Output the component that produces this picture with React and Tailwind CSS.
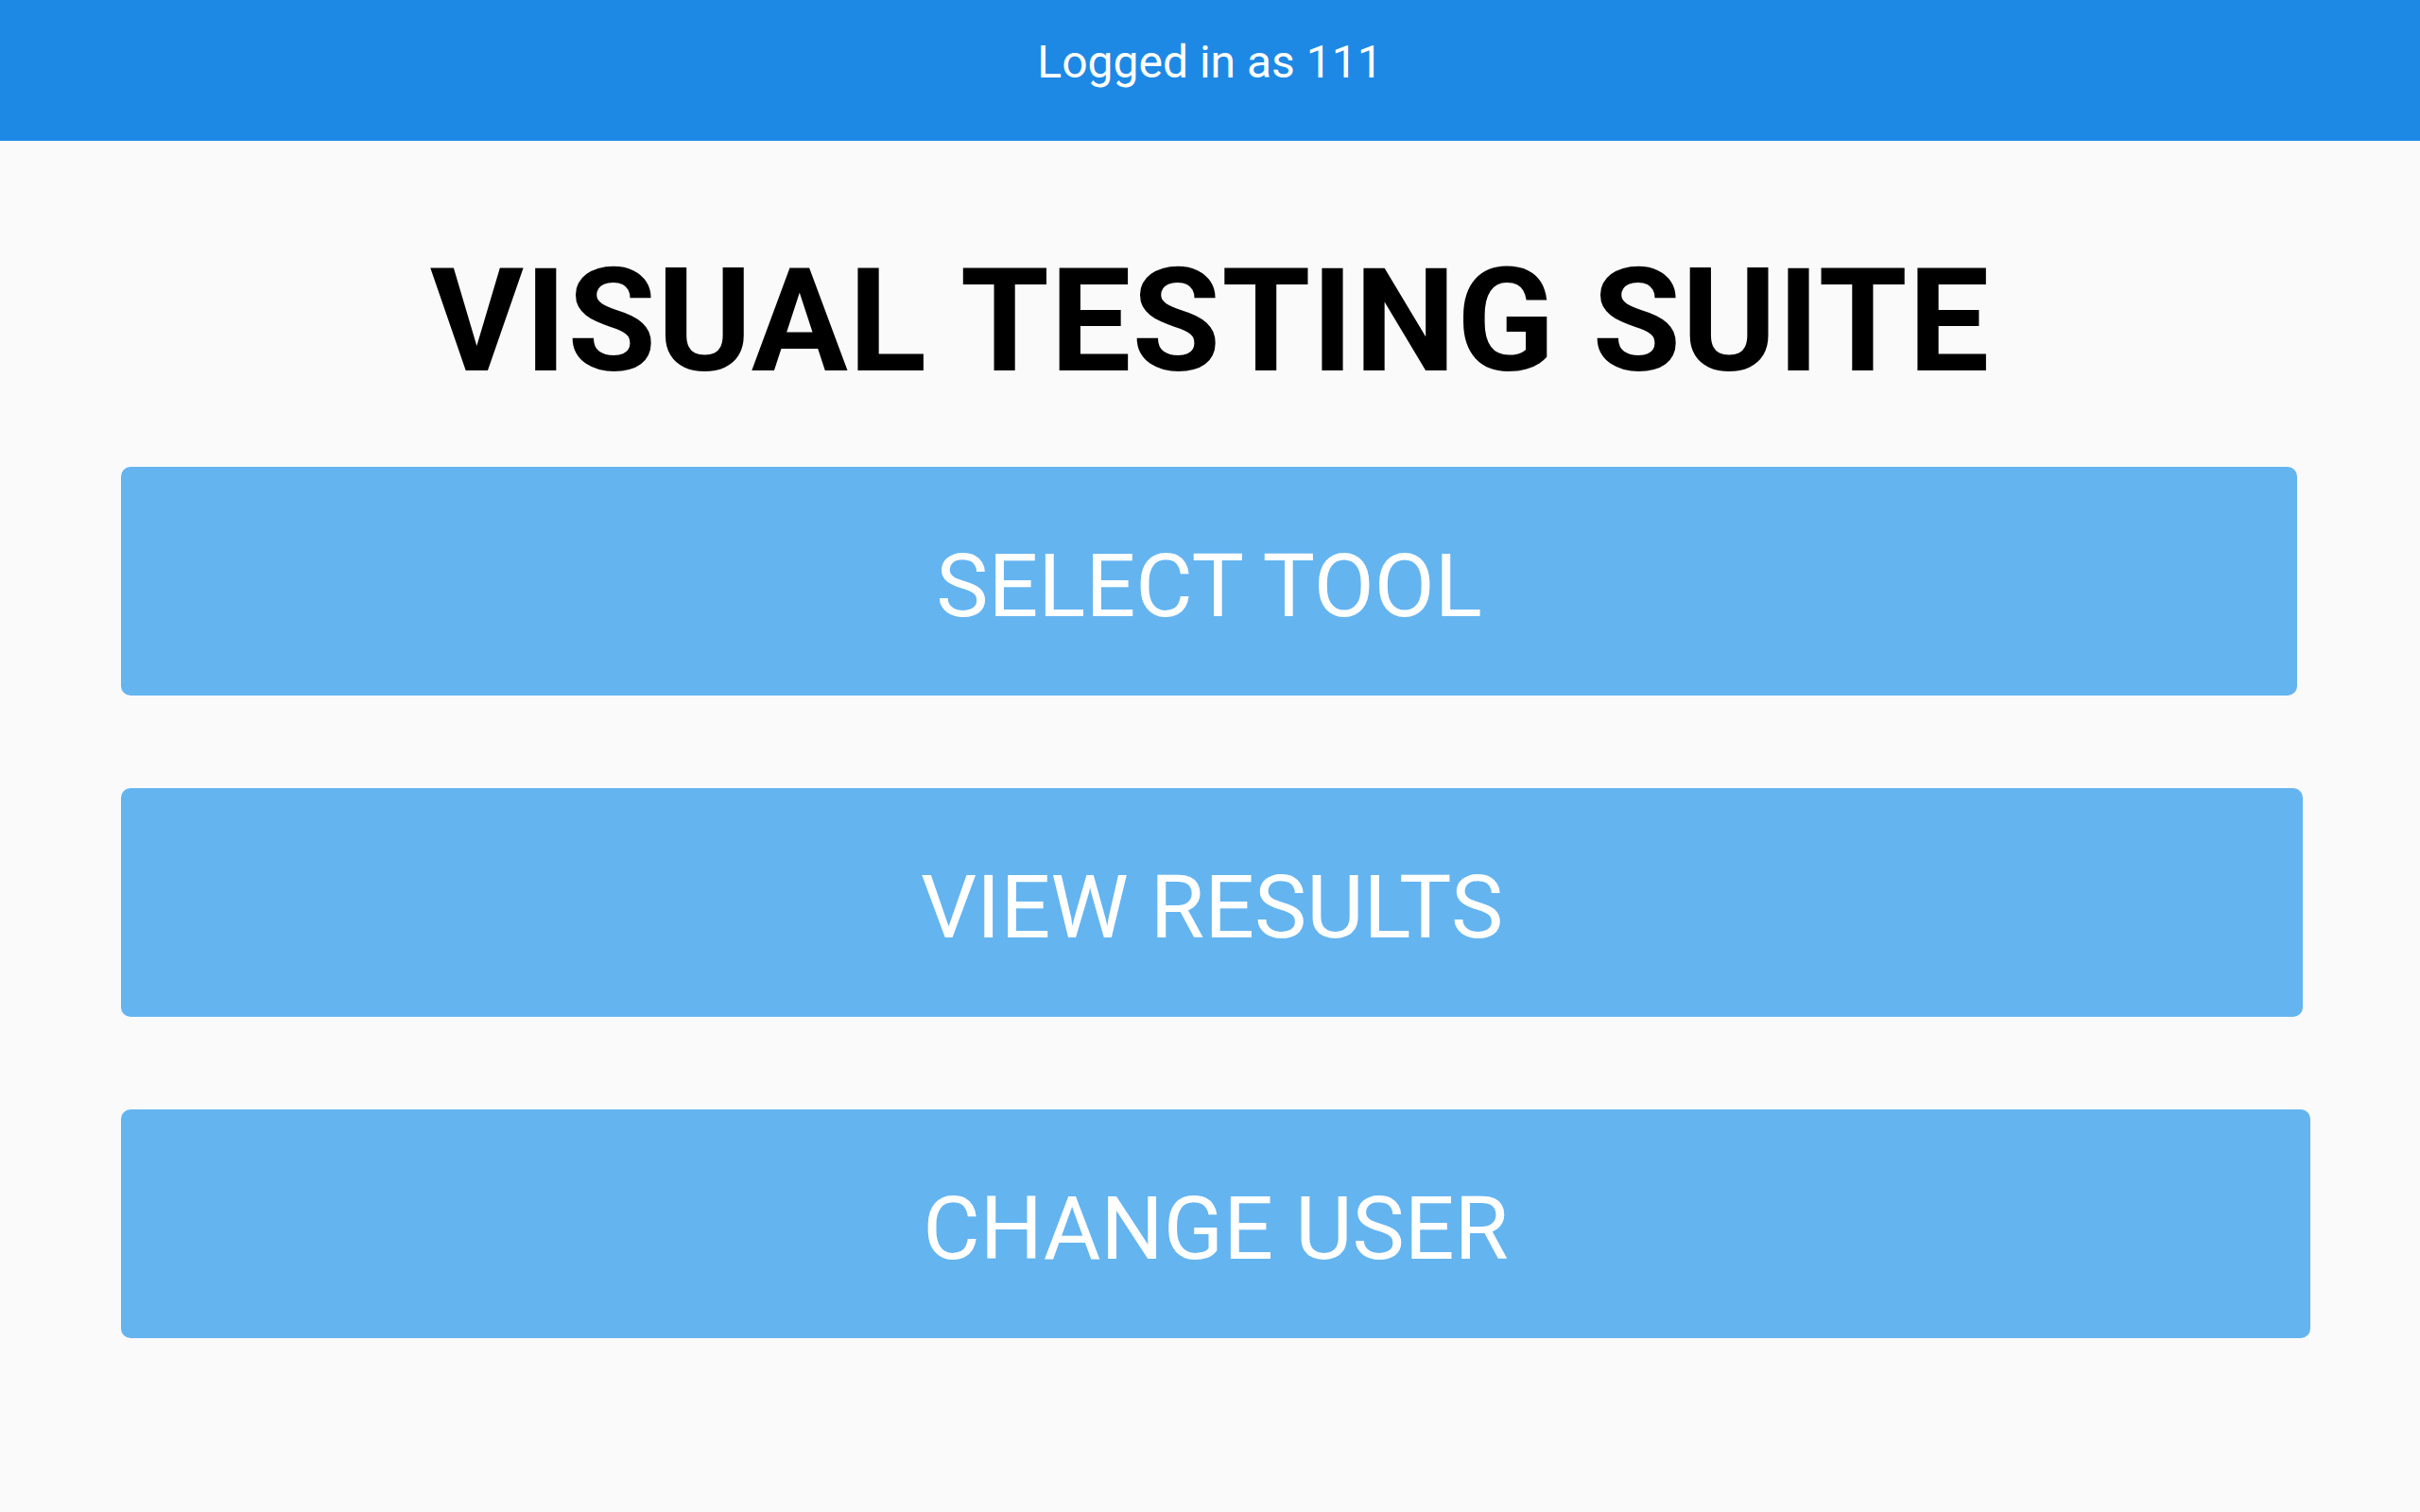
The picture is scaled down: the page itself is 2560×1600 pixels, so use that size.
const buttons = [
  { label: 'SELECT TOOL', width: 'w-[2302px]' },
  { label: 'VIEW RESULTS', width: 'w-[2308px]' },
  { label: 'CHANGE USER', width: 'w-[2316px]' },
];

const App = () => {
  return (
    <div className="min-h-screen bg-[#fafafa] font-['Roboto',sans-serif]">
      <header className="h-[149px] bg-[#1e88e5] pt-[30px] text-center text-[48px] text-white">
        Logged in as 111
      </header>

      <h1 className="mt-[77px] text-center text-[152px] font-bold tracking-[1px] text-black">
        VISUAL TESTING SUITE
      </h1>

      <div className="mt-[40px] flex flex-col gap-[98px] pl-[128px]">
        {buttons.map((b) => (
          <button
            key={b.label}
            className={`${b.width} flex h-[242px] items-center justify-center rounded-[10px] bg-[#64b4f0] pt-[12px] text-[93px] text-white`}
          >
            {b.label}
          </button>
        ))}
      </div>
    </div>
  );
};

export default App;
